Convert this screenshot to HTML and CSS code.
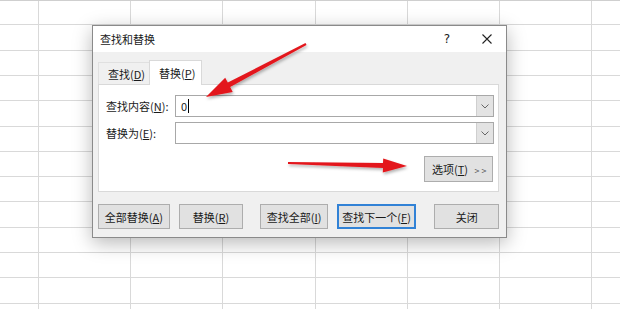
FILE: index.html
```html
<!DOCTYPE html>
<html lang="zh-CN">
<head>
<meta charset="utf-8">
<title>查找和替换</title>
<link rel="stylesheet" href="styles.css">
</head>
<body>
<div class="sheet">
  <div class="dialog">
    <div class="titlebar">
      <span class="title">查找和替换</span>
      <span class="help">?</span>
      <svg class="close" width="10" height="10" viewBox="0 0 10 10"><path d="M0.5 0.5 L9.5 9.5 M9.5 0.5 L0.5 9.5" stroke="#222" stroke-width="1.1" fill="none"/></svg>
    </div>
    <div class="body">
      <div class="tabs">
        <div class="tab">查找(<u>D</u>)</div>
        <div class="tab active">替换(<u>P</u>)</div>
      </div>
      <div class="panel">
        <div class="row">
          <label class="label">查找内容(<u>N</u>):</label>
          <div class="combo">
            <div class="value">0<span class="caret"></span></div>
            <div class="drop"><svg width="8" height="5" viewBox="0 0 8 5"><path d="M0.5 0.5 L4 4 L7.5 0.5" stroke="#666" stroke-width="1" fill="none"/></svg></div>
          </div>
        </div>
        <div class="row">
          <label class="label">替换为(<u>E</u>):</label>
          <div class="combo">
            <div class="value"></div>
            <div class="drop"><svg width="8" height="5" viewBox="0 0 8 5"><path d="M0.5 0.5 L4 4 L7.5 0.5" stroke="#666" stroke-width="1" fill="none"/></svg></div>
          </div>
        </div>
        <div class="opts-row">
          <button class="btn opts">选项(<u>T</u>) <span class="more">&gt; &gt;</span></button>
        </div>
      </div>
      <div class="actions">
        <button class="btn b-all">全部替换(<u>A</u>)</button>
        <button class="btn b-rep">替换(<u>R</u>)</button>
        <button class="btn b-findall">查找全部(<u>I</u>)</button>
        <button class="btn b-next focus">查找下一个(<u>F</u>)</button>
        <button class="btn b-close">关闭</button>
      </div>
    </div>
  </div>
  <svg class="arrows" width="620" height="309" viewBox="0 0 620 309">
    <defs>
      <filter id="sh" x="-20%" y="-20%" width="140%" height="160%">
        <feDropShadow dx="1" dy="2" stdDeviation="1.5" flood-color="#000" flood-opacity="0.3"/>
      </filter>
    </defs>
    <polygon filter="url(#sh)" fill="#e3171c" points="305.5,43.1 227.8,82.6 225.2,77.7 206,97 232.7,91.9 230.2,87.0 306.5,44.9"/>
    <polygon filter="url(#sh)" fill="#e3171c" points="288,162 383,162.9 383.2,158.4 407,166 382.8,172.4 383,167.9 288,164"/>
  </svg>
</div>
</body>
</html>
```

FILE: styles.css
```css
body {
  margin: 0;
  font-family: "Noto Sans CJK SC", "Microsoft YaHei", sans-serif;
  font-size: 11px;
  color: #1a1a1a;
}

.sheet {
  position: relative;
  width: 620px;
  height: 309px;
  overflow: hidden;
  box-sizing: border-box;
  padding: 25px 0 0 92px;
  background-color: #fff;
  background-image:
    linear-gradient(#cfcfcf, #cfcfcf),
    repeating-linear-gradient(to right, transparent 0 38px, #d9d9d9 38px 39px, transparent 39px 92.17px),
    repeating-linear-gradient(to bottom, transparent 0 24.3px, #d9d9d9 24.3px 25.3px, transparent 25.3px 24.85px);
  background-size: 100% 1px, 100% 100%, 100% 100%;
  background-repeat: no-repeat;
}

.dialog {
  width: 415px;
  height: 213px;
  box-sizing: border-box;
  border: 1px solid #8a8a8a;
  background: #f0f0f0;
  box-shadow: 0 5px 18px rgba(0, 0, 0, 0.28);
  display: flex;
  flex-direction: column;
}

.titlebar {
  height: 26px;
  flex: none;
  background: #fff;
  display: flex;
  align-items: center;
  padding-left: 7px;
}

.title {
  flex: 1;
}

.help {
  font-family: "DejaVu Sans", sans-serif;
  font-size: 12px;
  margin-right: 32px;
}

.close {
  margin-right: 14px;
}

.body {
  flex: 1;
  padding: 8px 7px 0 5px;
  display: flex;
  flex-direction: column;
}

.tabs {
  display: flex;
  align-items: flex-end;
  height: 25px;
  margin-bottom: -1px;
  position: relative;
  z-index: 1;
}

.tab {
  box-sizing: border-box;
  height: 22px;
  margin-bottom: 1px;
  width: 51px;
  padding-left: 9px;
  display: flex;
  align-items: center;
  border: 1px solid #e0e0e0;
  border-bottom: none;
  border-right: none;
  background: #f0f0f0;
}

.tab.active {
  height: 25px;
  margin-bottom: 0;
  width: 53px;
  padding-left: 9px;
  border: 1px solid #d9d9d9;
  border-bottom: none;
  background: #fff;
}

.panel {
  height: 108px;
  box-sizing: border-box;
  background: #fff;
  border: 1px solid #d9d9d9;
  padding: 10px 4px 0 7px;
}

.row {
  display: flex;
  align-items: center;
  height: 22px;
}

.row + .row {
  margin-top: 5px;
}

.label {
  width: 69px;
}

.combo {
  width: 319px;
  height: 22px;
  box-sizing: border-box;
  border: 1px solid #a8a8a8;
  display: flex;
  background: #fff;
}

.value {
  flex: 1;
  padding-left: 5px;
  line-height: 20px;
  display: flex;
  align-items: center;
}

.caret {
  display: inline-block;
  width: 1px;
  height: 14px;
  background: #000;
  margin-left: 1px;
}

.drop {
  width: 16px;
  background: #e3e3e3;
  border-left: 1px solid #cfcfcf;
  display: flex;
  align-items: center;
  justify-content: center;
}

.opts-row {
  display: flex;
  justify-content: flex-end;
  margin-top: 12px;
  margin-right: 1px;
}

.btn {
  box-sizing: border-box;
  height: 25px;
  padding: 0;
  font-family: inherit;
  font-size: 11px;
  color: #1a1a1a;
  background: #e1e1e1;
  border: 1px solid #adadad;
}

.opts {
  width: 69px;
  height: 26px;
  text-align: left;
  padding-left: 7px;
}

.more {
  font-size: 9px;
  color: #555;
  margin-left: 4px;
}

.actions {
  display: flex;
  margin-top: 12px;
}

.b-all { width: 72px; }
.b-rep { width: 65px; margin-left: 9px; }
.b-findall { width: 68px; margin-left: 17px; }
.b-next { width: 80px; margin-left: 9px; }
.b-close { width: 65px; margin-left: 18px; }

.focus {
  border: 2px solid #3182d6;
}

.arrows {
  position: absolute;
  left: 0;
  top: 0;
  pointer-events: none;
}
```
